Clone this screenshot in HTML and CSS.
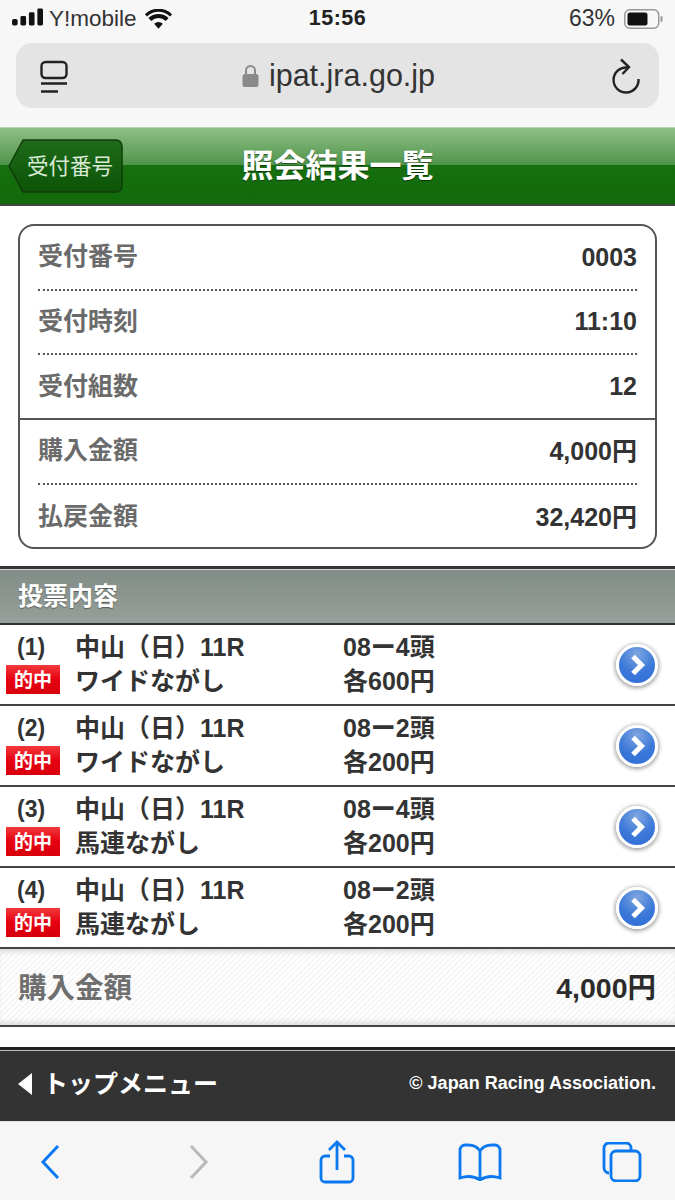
FILE: index.html
```html
<!DOCTYPE html>
<html lang="ja">
<head>
    <meta charset="UTF-8">
    <title>照会結果一覧</title>
    <link rel="stylesheet" href="styles.css">
</head>
<body>

<div class="browser-top">
    <div class="status-bar">
        <div class="status-left">
            <svg class="signal" width="31" height="18" viewBox="0 0 33 18"><rect x="0" y="11" width="6" height="7" rx="2"/><rect x="9" y="8" width="6" height="10" rx="1.5"/><rect x="18" y="4" width="6" height="14" rx="1.5"/><rect x="27" y="0" width="6" height="18" rx="1.5"/></svg>
            <span class="carrier">Y!mobile</span>
            <svg class="wifi" width="27" height="20" viewBox="0 0 28 20"><path d="M14 20l-4.500-5a6.500 6.500 0 0 1 9 0z"/><path d="M6.500 12l-3-3a15 15 0 0 1 21 0l-3 3a11 11 0 0 0-15 0z"/><path d="M2 7.500L0 5a20 20 0 0 1 28 0l-2 2.500a17 17 0 0 0-24 0z"/></svg>
        </div>
        <div class="status-time">15:56</div>
        <div class="status-right">
            <span>63%</span>
            <svg width="40" height="20" viewBox="0 0 40 20"><rect x="0.750" y="0.750" width="34" height="18.500" rx="5" fill="none" stroke="#999" stroke-width="1.500"/><rect x="3.500" y="3.500" width="20" height="13" rx="2.500" fill="#111"/><rect x="36.500" y="7" width="2" height="6" rx="1" fill="#999"/></svg>
        </div>
    </div>
    <div class="url-bar">
        <svg width="28" height="40" viewBox="0 0 28 40" fill="none" stroke="#222" stroke-width="2.400"><rect x="1.500" y="6" width="25" height="16" rx="4"/><path d="M1 27.500h26M1 35.500h17"/></svg>
        <div class="url-text">
            <svg width="17" height="24" viewBox="0 0 17 24"><path d="M4 11V6.500a4.500 4.500 0 0 1 9 0V11" fill="none" stroke="#8a8a8a" stroke-width="2"/><rect x="0.500" y="10" width="16" height="13" rx="2.500" fill="#8a8a8a"/></svg>
            <span>ipat.jra.go.jp</span>
        </div>
        <svg width="30" height="36" viewBox="0 0 30 36" fill="none" stroke="#222" stroke-width="2.400"><path d="M16 9.500A12.500 12.500 0 1 0 27.500 21"/><path d="M10 1.500l8 7.500-6.500 7"/></svg>
    </div>
</div>

<div class="page-head">
    <div class="back-btn">
        <svg class="back-shape" width="116" height="54" viewBox="0 0 116 54"><defs><linearGradient id="backGrad" x1="0" y1="0" x2="0" y2="1"><stop offset="0" stop-color="#1f6b1a"/><stop offset="1" stop-color="#0c5406"/></linearGradient></defs><path d="M15 1H108a6 6 0 0 1 6 6V47a6 6 0 0 1-6 6H15L1 27z" fill="url(#backGrad)" stroke="#0f3d0b" stroke-width="1.500"/></svg>
        <span>受付番号</span>
    </div>
    <h1>照会結果一覧</h1>
</div>

<div class="summary-wrap">
    <div class="summary-card">
        <div class="summary-group first">
            <div class="summary-row"><span class="label">受付番号</span><span class="value">0003</span></div>
            <div class="summary-row"><span class="label">受付時刻</span><span class="value">11:10</span></div>
            <div class="summary-row"><span class="label">受付組数</span><span class="value">12</span></div>
        </div>
        <div class="summary-group second">
            <div class="summary-row"><span class="label">購入金額</span><span class="value">4,000円</span></div>
            <div class="summary-row"><span class="label">払戻金額</span><span class="value">32,420円</span></div>
        </div>
    </div>
</div>

<div class="section-head">投票内容</div>

<div class="bet-list">
    <div class="bet-row">
        <div class="bet-no"><span>(1)</span><em class="hit">的中</em></div>
        <div class="bet-race"><span>中山（日）11R</span><span>ワイドながし</span></div>
        <div class="bet-count"><span>08ー4頭</span><span>各600円</span></div>
        <div class="arrow"><svg width="24" height="24" viewBox="0 0 24 24"><path d="M8 3.500l8.500 8.500L8 20.500" fill="none" stroke="#fff" stroke-width="5"/></svg></div>
    </div>
    <div class="bet-row">
        <div class="bet-no"><span>(2)</span><em class="hit">的中</em></div>
        <div class="bet-race"><span>中山（日）11R</span><span>ワイドながし</span></div>
        <div class="bet-count"><span>08ー2頭</span><span>各200円</span></div>
        <div class="arrow"><svg width="24" height="24" viewBox="0 0 24 24"><path d="M8 3.500l8.500 8.500L8 20.500" fill="none" stroke="#fff" stroke-width="5"/></svg></div>
    </div>
    <div class="bet-row">
        <div class="bet-no"><span>(3)</span><em class="hit">的中</em></div>
        <div class="bet-race"><span>中山（日）11R</span><span>馬連ながし</span></div>
        <div class="bet-count"><span>08ー4頭</span><span>各200円</span></div>
        <div class="arrow"><svg width="24" height="24" viewBox="0 0 24 24"><path d="M8 3.500l8.500 8.500L8 20.500" fill="none" stroke="#fff" stroke-width="5"/></svg></div>
    </div>
    <div class="bet-row">
        <div class="bet-no"><span>(4)</span><em class="hit">的中</em></div>
        <div class="bet-race"><span>中山（日）11R</span><span>馬連ながし</span></div>
        <div class="bet-count"><span>08ー2頭</span><span>各200円</span></div>
        <div class="arrow"><svg width="24" height="24" viewBox="0 0 24 24"><path d="M8 3.500l8.500 8.500L8 20.500" fill="none" stroke="#fff" stroke-width="5"/></svg></div>
    </div>
</div>

<div class="total-row">
    <span class="total-label">購入金額</span>
    <span class="total-value">4,000円</span>
</div>

<div class="page-foot">
    <div class="top-menu"><i class="tri"></i>トップメニュー</div>
    <div class="copyright">© Japan Racing Association.</div>
</div>

<div class="toolbar">
    <svg class="tb-back" width="26" height="40" viewBox="0 0 26 40" fill="none" stroke="#0a78f0" stroke-width="3"><path d="M20 4L5 20l15 16"/></svg>
    <svg class="tb-forward" width="26" height="40" viewBox="0 0 26 40" fill="none" stroke="#b9b9bb" stroke-width="3"><path d="M6 4l15 16L6 36"/></svg>
    <svg class="tb-share" width="36" height="44" viewBox="0 0 36 44" fill="none" stroke="#0a78f0" stroke-width="2.800"><path d="M11 16H6a4 4 0 0 0-4 4v18a4 4 0 0 0 4 4h24a4 4 0 0 0 4-4V20a4 4 0 0 0-4-4h-5"/><path d="M18 30V3M10 10l8-8 8 8"/></svg>
    <svg class="tb-book" width="44" height="38" viewBox="0 0 44 38" fill="none" stroke="#0a78f0" stroke-width="2.800"><path d="M22 8c-3-5-8-6-12-6H7a5 5 0 0 0-5 5v28c6-2 14-2 20 2 6-4 14-4 20-2V7a5 5 0 0 0-5-5h-3c-4 0-9 1-12 6zM22 8v28"/></svg>
    <svg class="tb-tabs" width="40" height="40" viewBox="0 0 40 40" fill="none" stroke="#0a78f0" stroke-width="2.800"><path d="M7 31a5 5 0 0 1-5-5V6a5 5 0 0 1 5-5h17a5 5 0 0 1 5 5v2"/><rect x="9" y="9" width="29" height="30" rx="5"/></svg>
</div>

</body>
</html>
```
FILE: styles.css
```css
* {
    margin: 0;
    padding: 0;
    box-sizing: border-box;
}

body {
    width: 675px;
    height: 1200px;
    overflow: hidden;
    background: #fff;
    font-family: "Liberation Sans", "Noto Sans CJK JP", sans-serif;
    color: #222;
}

/* ブラウザ上部 */
.browser-top {
    height: 127px;
    background: #f7f7f7;
    padding: 0 16px;
}

.status-bar {
    height: 43px;
    display: grid;
    grid-template-columns: 1fr auto 1fr;
    align-items: center;
    padding: 0 0 6px;
}

.status-left {
    display: flex;
    align-items: center;
    margin-left: -4px;
    gap: 6px;
    font-size: 22.500px;
    color: #333;
}

.signal {
    fill: #111;
    margin-top: -3px;
}

.wifi {
    fill: #111;
    margin-left: 2px;
}

.carrier {
    font-family: "Liberation Sans", sans-serif;
}

.status-time {
    font-size: 21.500px;
    font-weight: 700;
    letter-spacing: 0.5px;
    color: #222;
}

.status-right {
    display: flex;
    justify-content: flex-end;
    align-items: center;
    gap: 9px;
    margin-right: -16px;
    padding-right: 11px;
    font-size: 23px;
    color: #333;
}

.url-bar {
    height: 65px;
    background: #e4e4e5;
    border-radius: 16px;
    display: flex;
    align-items: center;
    justify-content: space-between;
    padding: 0 18px 0 24px;
}

.url-text {
    display: flex;
    align-items: center;
    gap: 10px;
    font-size: 30.500px;
    color: #333;
    margin-left: -2px;
}

/* ページヘッダー */
.page-head {
    height: 79px;
    position: relative;
    display: flex;
    justify-content: center;
    align-items: center;
    padding-bottom: 6px;
    border-top: 1px solid #b9cfb5;
    border-bottom: 2px solid #444;
    background: linear-gradient(#8fbf87 0, #4f9449 49%, #17700f 49%, #11690b 100%);
}

.page-head h1 {
    font-size: 32px;
    font-weight: 700;
    color: #fff;
    font-family: "Noto Sans CJK JP", sans-serif;
    text-shadow: 0 1px 1px rgba(0, 0, 0, 0.5);
}

.back-btn {
    position: absolute;
    left: 8px;
    top: 11px;
    width: 116px;
    height: 54px;
    display: flex;
    align-items: center;
    justify-content: flex-end;
    padding: 0 11px 4px 0;
}

.back-shape {
    position: absolute;
    left: 0;
    top: 0;
}

.back-btn span {
    position: relative;
    font-size: 21.500px;
    color: #d9ead6;
    font-family: "Noto Sans CJK JP", sans-serif;
}

/* 受付情報 */
.summary-wrap {
    padding: 18px 18px 17px 18px;
}

.summary-card {
    border: 2px solid #555;
    border-radius: 16px;
    height: 325px;
}

.summary-group {
    padding: 0 18px;
}

.summary-group.second {
    border-top: 2px solid #555;
}

.summary-row {
    height: 64.500px;
    display: flex;
    justify-content: space-between;
    align-items: center;
    border-bottom: 2px dotted #555;
    font-weight: 700;
    font-size: 25px;
}

.summary-row:last-child {
    border-bottom: none;
}

.first .summary-row:last-child {
    height: 63px;
}

.label {
    padding-bottom: 6px;
    color: #6b6b6b;
    font-family: "Noto Sans CJK JP", sans-serif;
}

.value {
    color: #333;
}

.second .value {
    padding-bottom: 4px;
}

/* 投票内容 */
.section-head {
    height: 59px;
    padding: 0 0 5px 18px;
    display: flex;
    align-items: center;
    border-top: 3px solid #333;
    border-bottom: 2px solid #333;
    background: linear-gradient(#828c86, #969f99);
    box-shadow: inset 0 1px 0 #d5d9d6;
    color: #fff;
    font-size: 25px;
    font-weight: 700;
    font-family: "Noto Sans CJK JP", sans-serif;
    text-shadow: 0 1px 1px rgba(0, 0, 0, 0.4);
}

.bet-row {
    height: 81px;
    display: flex;
    align-items: center;
    border-bottom: 2px solid #444;
    font-size: 25px;
    font-weight: 700;
    line-height: 34px;
    color: #333;
}

.bet-no {
    width: 75px;
    padding: 0 0 5px 6px;
    display: flex;
    flex-direction: column;
    align-items: flex-start;
    font-size: 23px;
}

.bet-no span {
    padding-left: 11px;
}

.hit {
    width: 54px;
    height: 29px;
    margin-top: 1px;
    padding-bottom: 2px;
    display: flex;
    align-items: center;
    justify-content: center;
    background: linear-gradient(#f23a3a 0, #e60012 50%, #d8000c 100%);
    color: #fff;
    font-style: normal;
    font-size: 19px;
    line-height: 1;
    font-family: "Noto Sans CJK JP", sans-serif;
}

.bet-race,
.bet-count {
    display: flex;
    flex-direction: column;
    padding-bottom: 2px;
}

.bet-race {
    width: 268px;
}

.bet-count {
    flex: 1;
}

.arrow {
    width: 42px;
    height: 42px;
    margin-right: 17px;
    border-radius: 50%;
    border: 3px solid #fff;
    background: radial-gradient(circle at 50% 20%, #7ea6e0 0, #3b78d8 55%, #2f6ed8 100%);
    box-shadow: 0 1px 4px 1px rgba(0, 0, 0, 0.4);
    display: flex;
    align-items: center;
    justify-content: center;
}

/* 合計 */
.total-row {
    height: 78px;
    display: flex;
    justify-content: space-between;
    align-items: center;
    padding: 0 19px 4px 18px;
    border-bottom: 2px solid #444;
    background: repeating-linear-gradient(135deg, #f6f6f6 0, #f6f6f6 2px, #fff 2px, #fff 4px);
    box-shadow: inset 0 -6px 6px -4px #d5d5d5, inset 0 6px 6px -4px #d5d5d5;
    font-weight: 700;
    font-size: 28.500px;
}

.total-label {
    color: #6f6f6f;
    font-family: "Noto Sans CJK JP", sans-serif;
}

.total-value {
    color: #2b2b2b;
}

/* フッター */
.page-foot {
    margin-top: 20px;
    height: 74px;
    background: #333;
    border-top: 3px solid #222;
    box-shadow: inset 0 1px 0 #bbb;
    display: flex;
    justify-content: space-between;
    align-items: center;
    padding: 0 19px 4px 18px;
    color: #fff;
}

.top-menu {
    display: flex;
    align-items: center;
    margin-bottom: 4px;
    font-size: 25px;
    font-weight: 700;
    font-family: "Noto Sans CJK JP", sans-serif;
}

.tri {
    width: 0;
    height: 0;
    margin: 4px 11px 0 0;
    border-top: 11px solid transparent;
    border-bottom: 11px solid transparent;
    border-right: 14px solid #fff;
}

.copyright {
    font-size: 18px;
    font-weight: 700;
}

/* ブラウザ下部 */
.toolbar {
    height: 80px;
    background: #f6f6f6;
    border-top: 1px solid #ddd;
    display: flex;
    align-items: center;
    padding-left: 38px;
}

.tb-forward {
    margin-left: 121px;
}

.tb-share {
    margin-left: 108px;
}

.tb-book {
    margin-left: 103px;
}

.tb-tabs {
    margin-left: 100px;
}
```
